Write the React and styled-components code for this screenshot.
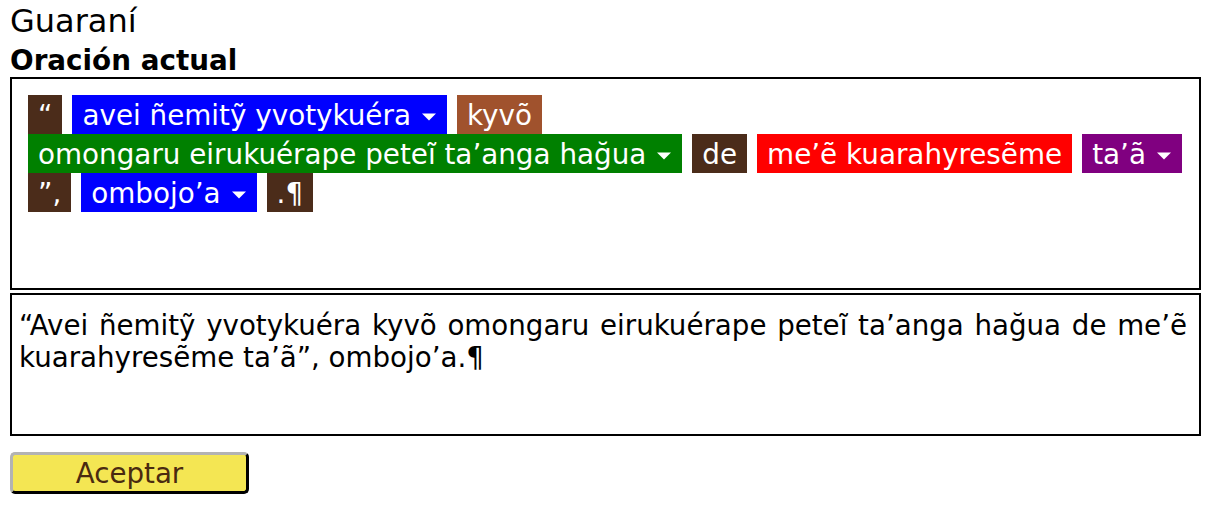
import React from "react";
import styled, { createGlobalStyle } from "styled-components";

const Global = createGlobalStyle`
  html, body { margin: 0; padding: 0; background: #fff; }
  body { font-family: "DejaVu Sans", Verdana, sans-serif; color: #000; }
`;

const Page = styled.div`
  width: 1191px;
  padding: 3px 0 0 10px;
  display: flex;
  flex-direction: column;
`;

const Title = styled.h1`
  margin: 0;
  font-size: 32px;
  line-height: 37px;
  font-weight: normal;
`;

const Heading = styled.h2`
  margin: 5px 0 0 0;
  font-size: 27.8px;
  line-height: 32px;
  font-weight: bold;
`;

const Panel = styled.div`
  box-sizing: border-box;
  border: 2px solid #000;
  height: ${(p) => p.$h}px;
  margin-top: ${(p) => p.$mt || 0}px;
`;

const TokenArea = styled(Panel)`
  padding: 16px 6px 16px 16px;
  display: flex;
  flex-wrap: wrap;
  align-content: flex-start;
  column-gap: 10px;
  row-gap: 0;
`;

const Token = styled.span`
  display: inline-block;
  background: ${(p) => p.$bg};
  color: #fff;
  font-size: 27.8px;
  line-height: 33px;
  padding: 4px 10px 2px 10px;
  white-space: nowrap;
`;

const Caret = styled.svg`
  width: 16px;
  height: 8px;
  margin-left: 10px;
  vertical-align: middle;
`;

const TextArea = styled(Panel)`
  padding: 15px 12px 8px 7px;
  font-size: 27.7px;
  line-height: 32px;
  text-align: justify;
`;

const Button = styled.button`
  box-sizing: border-box;
  margin-top: 16px;
  width: 239px;
  height: 42px;
  background: #f4e653;
  color: #4a2a10;
  font-family: "DejaVu Sans", Verdana, sans-serif;
  font-size: 27.7px;
  line-height: 32px;
  padding: 2px 0 0 0;
  border-style: solid;
  border-width: 3px;
  border-color: #b3b3b3 #000 #000 #b3b3b3;
  border-radius: 5px;
  cursor: pointer;
`;

const COLORS = {
  punct: "#4b2c1a",
  blue: "#0000ff",
  sienna: "#a0522d",
  green: "#008000",
  red: "#ff0000",
  purple: "#800080",
};

const tokens = [
  { t: "\u201C", c: "punct" },
  { t: "avei ñemitỹ yvotykuéra", c: "blue", dd: true },
  { t: "kyvõ", c: "sienna" },
  { t: "omongaru eirukuérape peteĩ ta\u2019anga hağua", c: "green", dd: true },
  { t: "de", c: "punct" },
  { t: "me\u2019ẽ kuarahyresẽme", c: "red" },
  { t: "ta\u2019ã", c: "purple", dd: true },
  { t: "\u201D,", c: "punct" },
  { t: "ombojo\u2019a", c: "blue", dd: true },
  { t: ".¶", c: "punct" },
];

function DropCaret() {
  return (
    <Caret viewBox="0 0 16 8" aria-hidden="true">
      <path d="M1 0.5 L15 0.5 L8 7.5 Z" fill="#fff" />
    </Caret>
  );
}

export default function App() {
  return (
    <>
      <Global />
      <Page>
        <Title>Guaraní</Title>
        <Heading>Oración actual</Heading>
        <TokenArea $h={213}>
          {tokens.map((tk, i) => (
            <Token key={i} $bg={COLORS[tk.c]}>
              {tk.t}
              {tk.dd && <DropCaret />}
            </Token>
          ))}
        </TokenArea>
        <TextArea $h={143} $mt={3}>
          “Avei ñemitỹ yvotykuéra kyvõ omongaru eirukuérape peteĩ ta’anga hağua de me’ẽ kuarahyresẽme ta’ã”, ombojo’a.¶
        </TextArea>
        <div>
          <Button>Aceptar</Button>
        </div>
      </Page>
    </>
  );
}
